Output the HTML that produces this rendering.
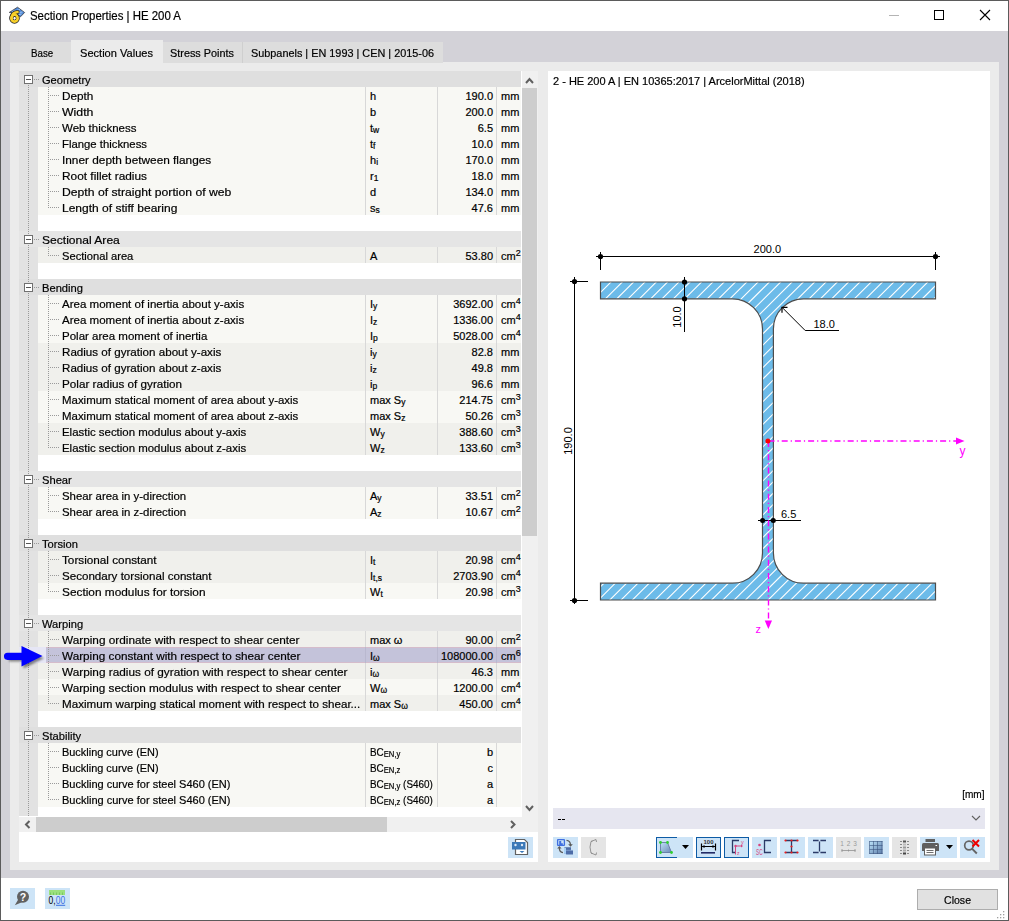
<!DOCTYPE html><html><head><meta charset="utf-8"><style>html,body{margin:0;padding:0;}body{width:1009px;height:921px;overflow:hidden;position:relative;background:#fff;font-family:"Liberation Sans",sans-serif;}div{box-sizing:border-box;}.t{position:absolute;height:16px;line-height:16px;padding-top:1px;font-size:11.5px;white-space:nowrap;color:#000;-webkit-text-stroke:0.2px #000}.v,.u,.sy{font-size:11px}.sb{font-size:8.5px;position:relative;top:1px}.sp{font-size:9px;position:relative;top:-4px}</style></head><body>
<div style="position:absolute;left:0px;top:0px;width:1009px;height:921px;background:#5b5b5b;"></div>
<div style="position:absolute;left:1px;top:1px;width:1007px;height:919px;background:#ffffff;"></div>
<div style="position:absolute;left:1px;top:31px;width:1007px;height:847px;background:#d3d2d8;"></div>
<div style="position:absolute;left:10px;top:62px;width:989px;height:808px;background:#ebebeb;"></div>
<div style="position:absolute;left:10px;top:42px;width:61px;height:21px;background:#dddddd;"></div>
<div style="position:absolute;left:71px;top:40px;width:92px;height:22px;background:#ebebeb;"></div>
<div style="position:absolute;left:163px;top:42px;width:79px;height:21px;background:#dddddd;"></div>
<div style="position:absolute;left:242px;top:42px;width:1px;height:21px;background:#cfcfcf;"></div>
<div style="position:absolute;left:243px;top:42px;width:200px;height:21px;background:#dddddd;"></div>
<div style="position:absolute;left:30px;top:9.94px;font-size:12px;line-height:13.80px;color:#000;white-space:nowrap;-webkit-text-stroke:0.2px #000;transform-origin:0 0;transform:scaleX(0.9524);">Section Properties | HE 200 A</div>
<div style="position:absolute;left:30.5px;top:47.39px;font-size:11.5px;line-height:13.22px;color:#000;white-space:nowrap;-webkit-text-stroke:0.2px #000;transform-origin:0 0;transform:scaleX(0.8469);">Base</div>
<div style="position:absolute;left:80px;top:47.39px;font-size:11.5px;line-height:13.22px;color:#000;white-space:nowrap;-webkit-text-stroke:0.2px #000;transform-origin:0 0;transform:scaleX(0.9623);">Section Values</div>
<div style="position:absolute;left:170px;top:47.39px;font-size:11.5px;line-height:13.22px;color:#000;white-space:nowrap;-webkit-text-stroke:0.2px #000;transform-origin:0 0;transform:scaleX(0.9447);">Stress Points</div>
<div style="position:absolute;left:251px;top:47.39px;font-size:11.5px;line-height:13.22px;color:#000;white-space:nowrap;-webkit-text-stroke:0.2px #000;transform-origin:0 0;transform:scaleX(0.9447);">Subpanels | EN 1993 | CEN | 2015-06</div>
<div style="position:absolute;left:889px;top:15px;width:10px;height:1px;background:#b4b4b4;"></div>
<div style="position:absolute;left:934px;top:10px;width:10px;height:10px;border:1px solid #000;"></div>
<svg style="position:absolute;left:979px;top:9px" width="12" height="12" viewBox="0 0 12 12"><path d="M1 1L11 11M11 1L1 11" stroke="#000" stroke-width="1.1"/></svg>
<div style="position:absolute;left:19px;top:71px;width:519px;height:791px;background:#ffffff;"></div>
<div style="position:absolute;left:19px;top:71px;width:19px;height:745px;background:#e2e2e2;"></div>
<div style="position:absolute;left:19px;top:71px;width:502px;height:16px;background:#dfdfdf;"></div>
<div style="position:absolute;left:38px;top:87px;width:483px;height:16px;background:#f8f8f4;"></div>
<div style="position:absolute;left:365px;top:87px;width:1px;height:16px;background:#d8d8d8;"></div>
<div style="position:absolute;left:437px;top:87px;width:1px;height:16px;background:#d8d8d8;"></div>
<div style="position:absolute;left:496px;top:87px;width:1px;height:16px;background:#d8d8d8;"></div>
<div style="position:absolute;left:38px;top:103px;width:483px;height:16px;background:#f8f8f4;"></div>
<div style="position:absolute;left:365px;top:103px;width:1px;height:16px;background:#d8d8d8;"></div>
<div style="position:absolute;left:437px;top:103px;width:1px;height:16px;background:#d8d8d8;"></div>
<div style="position:absolute;left:496px;top:103px;width:1px;height:16px;background:#d8d8d8;"></div>
<div style="position:absolute;left:38px;top:119px;width:483px;height:16px;background:#f8f8f4;"></div>
<div style="position:absolute;left:365px;top:119px;width:1px;height:16px;background:#d8d8d8;"></div>
<div style="position:absolute;left:437px;top:119px;width:1px;height:16px;background:#d8d8d8;"></div>
<div style="position:absolute;left:496px;top:119px;width:1px;height:16px;background:#d8d8d8;"></div>
<div style="position:absolute;left:38px;top:135px;width:483px;height:16px;background:#f8f8f4;"></div>
<div style="position:absolute;left:365px;top:135px;width:1px;height:16px;background:#d8d8d8;"></div>
<div style="position:absolute;left:437px;top:135px;width:1px;height:16px;background:#d8d8d8;"></div>
<div style="position:absolute;left:496px;top:135px;width:1px;height:16px;background:#d8d8d8;"></div>
<div style="position:absolute;left:38px;top:151px;width:483px;height:16px;background:#f8f8f4;"></div>
<div style="position:absolute;left:365px;top:151px;width:1px;height:16px;background:#d8d8d8;"></div>
<div style="position:absolute;left:437px;top:151px;width:1px;height:16px;background:#d8d8d8;"></div>
<div style="position:absolute;left:496px;top:151px;width:1px;height:16px;background:#d8d8d8;"></div>
<div style="position:absolute;left:38px;top:167px;width:483px;height:16px;background:#f8f8f4;"></div>
<div style="position:absolute;left:365px;top:167px;width:1px;height:16px;background:#d8d8d8;"></div>
<div style="position:absolute;left:437px;top:167px;width:1px;height:16px;background:#d8d8d8;"></div>
<div style="position:absolute;left:496px;top:167px;width:1px;height:16px;background:#d8d8d8;"></div>
<div style="position:absolute;left:38px;top:183px;width:483px;height:16px;background:#f8f8f4;"></div>
<div style="position:absolute;left:365px;top:183px;width:1px;height:16px;background:#d8d8d8;"></div>
<div style="position:absolute;left:437px;top:183px;width:1px;height:16px;background:#d8d8d8;"></div>
<div style="position:absolute;left:496px;top:183px;width:1px;height:16px;background:#d8d8d8;"></div>
<div style="position:absolute;left:38px;top:199px;width:483px;height:16px;background:#f8f8f4;"></div>
<div style="position:absolute;left:365px;top:199px;width:1px;height:16px;background:#d8d8d8;"></div>
<div style="position:absolute;left:437px;top:199px;width:1px;height:16px;background:#d8d8d8;"></div>
<div style="position:absolute;left:496px;top:199px;width:1px;height:16px;background:#d8d8d8;"></div>
<div style="position:absolute;left:19px;top:231px;width:502px;height:16px;background:#e5e5e5;"></div>
<div style="position:absolute;left:38px;top:247px;width:483px;height:16px;background:#f0f0ec;"></div>
<div style="position:absolute;left:365px;top:247px;width:1px;height:16px;background:#d8d8d8;"></div>
<div style="position:absolute;left:437px;top:247px;width:1px;height:16px;background:#d8d8d8;"></div>
<div style="position:absolute;left:496px;top:247px;width:1px;height:16px;background:#d8d8d8;"></div>
<div style="position:absolute;left:19px;top:279px;width:502px;height:16px;background:#dfdfdf;"></div>
<div style="position:absolute;left:38px;top:295px;width:483px;height:16px;background:#f8f8f4;"></div>
<div style="position:absolute;left:365px;top:295px;width:1px;height:16px;background:#d8d8d8;"></div>
<div style="position:absolute;left:437px;top:295px;width:1px;height:16px;background:#d8d8d8;"></div>
<div style="position:absolute;left:496px;top:295px;width:1px;height:16px;background:#d8d8d8;"></div>
<div style="position:absolute;left:38px;top:311px;width:483px;height:16px;background:#f8f8f4;"></div>
<div style="position:absolute;left:365px;top:311px;width:1px;height:16px;background:#d8d8d8;"></div>
<div style="position:absolute;left:437px;top:311px;width:1px;height:16px;background:#d8d8d8;"></div>
<div style="position:absolute;left:496px;top:311px;width:1px;height:16px;background:#d8d8d8;"></div>
<div style="position:absolute;left:38px;top:327px;width:483px;height:16px;background:#f8f8f4;"></div>
<div style="position:absolute;left:365px;top:327px;width:1px;height:16px;background:#d8d8d8;"></div>
<div style="position:absolute;left:437px;top:327px;width:1px;height:16px;background:#d8d8d8;"></div>
<div style="position:absolute;left:496px;top:327px;width:1px;height:16px;background:#d8d8d8;"></div>
<div style="position:absolute;left:38px;top:343px;width:483px;height:16px;background:#f0f0ec;"></div>
<div style="position:absolute;left:365px;top:343px;width:1px;height:16px;background:#d8d8d8;"></div>
<div style="position:absolute;left:437px;top:343px;width:1px;height:16px;background:#d8d8d8;"></div>
<div style="position:absolute;left:496px;top:343px;width:1px;height:16px;background:#d8d8d8;"></div>
<div style="position:absolute;left:38px;top:359px;width:483px;height:16px;background:#f0f0ec;"></div>
<div style="position:absolute;left:365px;top:359px;width:1px;height:16px;background:#d8d8d8;"></div>
<div style="position:absolute;left:437px;top:359px;width:1px;height:16px;background:#d8d8d8;"></div>
<div style="position:absolute;left:496px;top:359px;width:1px;height:16px;background:#d8d8d8;"></div>
<div style="position:absolute;left:38px;top:375px;width:483px;height:16px;background:#f0f0ec;"></div>
<div style="position:absolute;left:365px;top:375px;width:1px;height:16px;background:#d8d8d8;"></div>
<div style="position:absolute;left:437px;top:375px;width:1px;height:16px;background:#d8d8d8;"></div>
<div style="position:absolute;left:496px;top:375px;width:1px;height:16px;background:#d8d8d8;"></div>
<div style="position:absolute;left:38px;top:391px;width:483px;height:16px;background:#f8f8f4;"></div>
<div style="position:absolute;left:365px;top:391px;width:1px;height:16px;background:#d8d8d8;"></div>
<div style="position:absolute;left:437px;top:391px;width:1px;height:16px;background:#d8d8d8;"></div>
<div style="position:absolute;left:496px;top:391px;width:1px;height:16px;background:#d8d8d8;"></div>
<div style="position:absolute;left:38px;top:407px;width:483px;height:16px;background:#f8f8f4;"></div>
<div style="position:absolute;left:365px;top:407px;width:1px;height:16px;background:#d8d8d8;"></div>
<div style="position:absolute;left:437px;top:407px;width:1px;height:16px;background:#d8d8d8;"></div>
<div style="position:absolute;left:496px;top:407px;width:1px;height:16px;background:#d8d8d8;"></div>
<div style="position:absolute;left:38px;top:423px;width:483px;height:16px;background:#f0f0ec;"></div>
<div style="position:absolute;left:365px;top:423px;width:1px;height:16px;background:#d8d8d8;"></div>
<div style="position:absolute;left:437px;top:423px;width:1px;height:16px;background:#d8d8d8;"></div>
<div style="position:absolute;left:496px;top:423px;width:1px;height:16px;background:#d8d8d8;"></div>
<div style="position:absolute;left:38px;top:439px;width:483px;height:16px;background:#f0f0ec;"></div>
<div style="position:absolute;left:365px;top:439px;width:1px;height:16px;background:#d8d8d8;"></div>
<div style="position:absolute;left:437px;top:439px;width:1px;height:16px;background:#d8d8d8;"></div>
<div style="position:absolute;left:496px;top:439px;width:1px;height:16px;background:#d8d8d8;"></div>
<div style="position:absolute;left:19px;top:471px;width:502px;height:16px;background:#e5e5e5;"></div>
<div style="position:absolute;left:38px;top:487px;width:483px;height:16px;background:#f8f8f4;"></div>
<div style="position:absolute;left:365px;top:487px;width:1px;height:16px;background:#d8d8d8;"></div>
<div style="position:absolute;left:437px;top:487px;width:1px;height:16px;background:#d8d8d8;"></div>
<div style="position:absolute;left:496px;top:487px;width:1px;height:16px;background:#d8d8d8;"></div>
<div style="position:absolute;left:38px;top:503px;width:483px;height:16px;background:#f8f8f4;"></div>
<div style="position:absolute;left:365px;top:503px;width:1px;height:16px;background:#d8d8d8;"></div>
<div style="position:absolute;left:437px;top:503px;width:1px;height:16px;background:#d8d8d8;"></div>
<div style="position:absolute;left:496px;top:503px;width:1px;height:16px;background:#d8d8d8;"></div>
<div style="position:absolute;left:19px;top:535px;width:502px;height:16px;background:#dfdfdf;"></div>
<div style="position:absolute;left:38px;top:551px;width:483px;height:16px;background:#f0f0ec;"></div>
<div style="position:absolute;left:365px;top:551px;width:1px;height:16px;background:#d8d8d8;"></div>
<div style="position:absolute;left:437px;top:551px;width:1px;height:16px;background:#d8d8d8;"></div>
<div style="position:absolute;left:496px;top:551px;width:1px;height:16px;background:#d8d8d8;"></div>
<div style="position:absolute;left:38px;top:567px;width:483px;height:16px;background:#f0f0ec;"></div>
<div style="position:absolute;left:365px;top:567px;width:1px;height:16px;background:#d8d8d8;"></div>
<div style="position:absolute;left:437px;top:567px;width:1px;height:16px;background:#d8d8d8;"></div>
<div style="position:absolute;left:496px;top:567px;width:1px;height:16px;background:#d8d8d8;"></div>
<div style="position:absolute;left:38px;top:583px;width:483px;height:16px;background:#f8f8f4;"></div>
<div style="position:absolute;left:365px;top:583px;width:1px;height:16px;background:#d8d8d8;"></div>
<div style="position:absolute;left:437px;top:583px;width:1px;height:16px;background:#d8d8d8;"></div>
<div style="position:absolute;left:496px;top:583px;width:1px;height:16px;background:#d8d8d8;"></div>
<div style="position:absolute;left:19px;top:615px;width:502px;height:16px;background:#e5e5e5;"></div>
<div style="position:absolute;left:38px;top:631px;width:483px;height:16px;background:#f0f0ec;"></div>
<div style="position:absolute;left:365px;top:631px;width:1px;height:16px;background:#d8d8d8;"></div>
<div style="position:absolute;left:437px;top:631px;width:1px;height:16px;background:#d8d8d8;"></div>
<div style="position:absolute;left:496px;top:631px;width:1px;height:16px;background:#d8d8d8;"></div>
<div style="position:absolute;left:19px;top:647px;width:27px;height:16px;background:#e6e6f5;"></div>
<div style="position:absolute;left:46px;top:647px;width:475px;height:16px;background:#c4c3da;"></div>
<div style="position:absolute;left:46px;top:647px;width:475px;height:1px;background:#d5bccb;"></div>
<div style="position:absolute;left:46px;top:662px;width:475px;height:1px;background:#d5bccb;"></div>
<div style="position:absolute;left:365px;top:647px;width:1px;height:16px;background:#b9b8cf;"></div>
<div style="position:absolute;left:437px;top:647px;width:1px;height:16px;background:#b9b8cf;"></div>
<div style="position:absolute;left:496px;top:647px;width:1px;height:16px;background:#b9b8cf;"></div>
<div style="position:absolute;left:38px;top:663px;width:483px;height:16px;background:#f0f0ec;"></div>
<div style="position:absolute;left:365px;top:663px;width:1px;height:16px;background:#d8d8d8;"></div>
<div style="position:absolute;left:437px;top:663px;width:1px;height:16px;background:#d8d8d8;"></div>
<div style="position:absolute;left:496px;top:663px;width:1px;height:16px;background:#d8d8d8;"></div>
<div style="position:absolute;left:38px;top:679px;width:483px;height:16px;background:#f8f8f4;"></div>
<div style="position:absolute;left:365px;top:679px;width:1px;height:16px;background:#d8d8d8;"></div>
<div style="position:absolute;left:437px;top:679px;width:1px;height:16px;background:#d8d8d8;"></div>
<div style="position:absolute;left:496px;top:679px;width:1px;height:16px;background:#d8d8d8;"></div>
<div style="position:absolute;left:38px;top:695px;width:483px;height:16px;background:#f0f0ec;"></div>
<div style="position:absolute;left:365px;top:695px;width:1px;height:16px;background:#d8d8d8;"></div>
<div style="position:absolute;left:437px;top:695px;width:1px;height:16px;background:#d8d8d8;"></div>
<div style="position:absolute;left:496px;top:695px;width:1px;height:16px;background:#d8d8d8;"></div>
<div style="position:absolute;left:19px;top:727px;width:502px;height:16px;background:#dfdfdf;"></div>
<div style="position:absolute;left:38px;top:743px;width:483px;height:16px;background:#f8f8f4;"></div>
<div style="position:absolute;left:365px;top:743px;width:1px;height:16px;background:#d8d8d8;"></div>
<div style="position:absolute;left:437px;top:743px;width:1px;height:16px;background:#d8d8d8;"></div>
<div style="position:absolute;left:496px;top:743px;width:1px;height:16px;background:#d8d8d8;"></div>
<div style="position:absolute;left:38px;top:759px;width:483px;height:16px;background:#f8f8f4;"></div>
<div style="position:absolute;left:365px;top:759px;width:1px;height:16px;background:#d8d8d8;"></div>
<div style="position:absolute;left:437px;top:759px;width:1px;height:16px;background:#d8d8d8;"></div>
<div style="position:absolute;left:496px;top:759px;width:1px;height:16px;background:#d8d8d8;"></div>
<div style="position:absolute;left:38px;top:775px;width:483px;height:16px;background:#f8f8f4;"></div>
<div style="position:absolute;left:365px;top:775px;width:1px;height:16px;background:#d8d8d8;"></div>
<div style="position:absolute;left:437px;top:775px;width:1px;height:16px;background:#d8d8d8;"></div>
<div style="position:absolute;left:496px;top:775px;width:1px;height:16px;background:#d8d8d8;"></div>
<div style="position:absolute;left:38px;top:791px;width:483px;height:16px;background:#f8f8f4;"></div>
<div style="position:absolute;left:365px;top:791px;width:1px;height:16px;background:#d8d8d8;"></div>
<div style="position:absolute;left:437px;top:791px;width:1px;height:16px;background:#d8d8d8;"></div>
<div style="position:absolute;left:496px;top:791px;width:1px;height:16px;background:#d8d8d8;"></div>
<div style="position:absolute;left:48px;top:87px;width:1px;height:121px;background:repeating-linear-gradient(#9a9a9a 0 1px,transparent 1px 2px)"></div>
<div style="position:absolute;left:48px;top:247px;width:1px;height:9px;background:repeating-linear-gradient(#9a9a9a 0 1px,transparent 1px 2px)"></div>
<div style="position:absolute;left:48px;top:295px;width:1px;height:153px;background:repeating-linear-gradient(#9a9a9a 0 1px,transparent 1px 2px)"></div>
<div style="position:absolute;left:48px;top:487px;width:1px;height:25px;background:repeating-linear-gradient(#9a9a9a 0 1px,transparent 1px 2px)"></div>
<div style="position:absolute;left:48px;top:551px;width:1px;height:41px;background:repeating-linear-gradient(#9a9a9a 0 1px,transparent 1px 2px)"></div>
<div style="position:absolute;left:48px;top:631px;width:1px;height:73px;background:repeating-linear-gradient(#9a9a9a 0 1px,transparent 1px 2px)"></div>
<div style="position:absolute;left:48px;top:743px;width:1px;height:57px;background:repeating-linear-gradient(#9a9a9a 0 1px,transparent 1px 2px)"></div>
<div style="position:absolute;left:28px;top:85px;width:1px;height:732px;background:repeating-linear-gradient(#9a9a9a 0 1px,transparent 1px 2px)"></div>
<div style="position:absolute;left:34px;top:79px;width:6px;height:1px;background:repeating-linear-gradient(90deg,#9a9a9a 0 1px,transparent 1px 2px)"></div>
<div style="position:absolute;left:50px;top:95px;width:10px;height:1px;background:repeating-linear-gradient(90deg,#9a9a9a 0 1px,transparent 1px 2px)"></div>
<div style="position:absolute;left:50px;top:111px;width:10px;height:1px;background:repeating-linear-gradient(90deg,#9a9a9a 0 1px,transparent 1px 2px)"></div>
<div style="position:absolute;left:50px;top:127px;width:10px;height:1px;background:repeating-linear-gradient(90deg,#9a9a9a 0 1px,transparent 1px 2px)"></div>
<div style="position:absolute;left:50px;top:143px;width:10px;height:1px;background:repeating-linear-gradient(90deg,#9a9a9a 0 1px,transparent 1px 2px)"></div>
<div style="position:absolute;left:50px;top:159px;width:10px;height:1px;background:repeating-linear-gradient(90deg,#9a9a9a 0 1px,transparent 1px 2px)"></div>
<div style="position:absolute;left:50px;top:175px;width:10px;height:1px;background:repeating-linear-gradient(90deg,#9a9a9a 0 1px,transparent 1px 2px)"></div>
<div style="position:absolute;left:50px;top:191px;width:10px;height:1px;background:repeating-linear-gradient(90deg,#9a9a9a 0 1px,transparent 1px 2px)"></div>
<div style="position:absolute;left:50px;top:207px;width:10px;height:1px;background:repeating-linear-gradient(90deg,#9a9a9a 0 1px,transparent 1px 2px)"></div>
<div style="position:absolute;left:34px;top:239px;width:6px;height:1px;background:repeating-linear-gradient(90deg,#9a9a9a 0 1px,transparent 1px 2px)"></div>
<div style="position:absolute;left:50px;top:255px;width:10px;height:1px;background:repeating-linear-gradient(90deg,#9a9a9a 0 1px,transparent 1px 2px)"></div>
<div style="position:absolute;left:34px;top:287px;width:6px;height:1px;background:repeating-linear-gradient(90deg,#9a9a9a 0 1px,transparent 1px 2px)"></div>
<div style="position:absolute;left:50px;top:303px;width:10px;height:1px;background:repeating-linear-gradient(90deg,#9a9a9a 0 1px,transparent 1px 2px)"></div>
<div style="position:absolute;left:50px;top:319px;width:10px;height:1px;background:repeating-linear-gradient(90deg,#9a9a9a 0 1px,transparent 1px 2px)"></div>
<div style="position:absolute;left:50px;top:335px;width:10px;height:1px;background:repeating-linear-gradient(90deg,#9a9a9a 0 1px,transparent 1px 2px)"></div>
<div style="position:absolute;left:50px;top:351px;width:10px;height:1px;background:repeating-linear-gradient(90deg,#9a9a9a 0 1px,transparent 1px 2px)"></div>
<div style="position:absolute;left:50px;top:367px;width:10px;height:1px;background:repeating-linear-gradient(90deg,#9a9a9a 0 1px,transparent 1px 2px)"></div>
<div style="position:absolute;left:50px;top:383px;width:10px;height:1px;background:repeating-linear-gradient(90deg,#9a9a9a 0 1px,transparent 1px 2px)"></div>
<div style="position:absolute;left:50px;top:399px;width:10px;height:1px;background:repeating-linear-gradient(90deg,#9a9a9a 0 1px,transparent 1px 2px)"></div>
<div style="position:absolute;left:50px;top:415px;width:10px;height:1px;background:repeating-linear-gradient(90deg,#9a9a9a 0 1px,transparent 1px 2px)"></div>
<div style="position:absolute;left:50px;top:431px;width:10px;height:1px;background:repeating-linear-gradient(90deg,#9a9a9a 0 1px,transparent 1px 2px)"></div>
<div style="position:absolute;left:50px;top:447px;width:10px;height:1px;background:repeating-linear-gradient(90deg,#9a9a9a 0 1px,transparent 1px 2px)"></div>
<div style="position:absolute;left:34px;top:479px;width:6px;height:1px;background:repeating-linear-gradient(90deg,#9a9a9a 0 1px,transparent 1px 2px)"></div>
<div style="position:absolute;left:50px;top:495px;width:10px;height:1px;background:repeating-linear-gradient(90deg,#9a9a9a 0 1px,transparent 1px 2px)"></div>
<div style="position:absolute;left:50px;top:511px;width:10px;height:1px;background:repeating-linear-gradient(90deg,#9a9a9a 0 1px,transparent 1px 2px)"></div>
<div style="position:absolute;left:34px;top:543px;width:6px;height:1px;background:repeating-linear-gradient(90deg,#9a9a9a 0 1px,transparent 1px 2px)"></div>
<div style="position:absolute;left:50px;top:559px;width:10px;height:1px;background:repeating-linear-gradient(90deg,#9a9a9a 0 1px,transparent 1px 2px)"></div>
<div style="position:absolute;left:50px;top:575px;width:10px;height:1px;background:repeating-linear-gradient(90deg,#9a9a9a 0 1px,transparent 1px 2px)"></div>
<div style="position:absolute;left:50px;top:591px;width:10px;height:1px;background:repeating-linear-gradient(90deg,#9a9a9a 0 1px,transparent 1px 2px)"></div>
<div style="position:absolute;left:34px;top:623px;width:6px;height:1px;background:repeating-linear-gradient(90deg,#9a9a9a 0 1px,transparent 1px 2px)"></div>
<div style="position:absolute;left:50px;top:639px;width:10px;height:1px;background:repeating-linear-gradient(90deg,#9a9a9a 0 1px,transparent 1px 2px)"></div>
<div style="position:absolute;left:50px;top:655px;width:10px;height:1px;background:repeating-linear-gradient(90deg,#9a9a9a 0 1px,transparent 1px 2px)"></div>
<div style="position:absolute;left:50px;top:671px;width:10px;height:1px;background:repeating-linear-gradient(90deg,#9a9a9a 0 1px,transparent 1px 2px)"></div>
<div style="position:absolute;left:50px;top:687px;width:10px;height:1px;background:repeating-linear-gradient(90deg,#9a9a9a 0 1px,transparent 1px 2px)"></div>
<div style="position:absolute;left:50px;top:703px;width:10px;height:1px;background:repeating-linear-gradient(90deg,#9a9a9a 0 1px,transparent 1px 2px)"></div>
<div style="position:absolute;left:34px;top:735px;width:6px;height:1px;background:repeating-linear-gradient(90deg,#9a9a9a 0 1px,transparent 1px 2px)"></div>
<div style="position:absolute;left:50px;top:751px;width:10px;height:1px;background:repeating-linear-gradient(90deg,#9a9a9a 0 1px,transparent 1px 2px)"></div>
<div style="position:absolute;left:50px;top:767px;width:10px;height:1px;background:repeating-linear-gradient(90deg,#9a9a9a 0 1px,transparent 1px 2px)"></div>
<div style="position:absolute;left:50px;top:783px;width:10px;height:1px;background:repeating-linear-gradient(90deg,#9a9a9a 0 1px,transparent 1px 2px)"></div>
<div style="position:absolute;left:50px;top:799px;width:10px;height:1px;background:repeating-linear-gradient(90deg,#9a9a9a 0 1px,transparent 1px 2px)"></div>
<div style="position:absolute;left:24px;top:75px;width:9px;height:9px;border:1px solid #707070;background:#fff"></div><div style="position:absolute;left:26px;top:79px;width:5px;height:1px;background:#555"></div>
<div style="position:absolute;left:24px;top:235px;width:9px;height:9px;border:1px solid #707070;background:#fff"></div><div style="position:absolute;left:26px;top:239px;width:5px;height:1px;background:#555"></div>
<div style="position:absolute;left:24px;top:283px;width:9px;height:9px;border:1px solid #707070;background:#fff"></div><div style="position:absolute;left:26px;top:287px;width:5px;height:1px;background:#555"></div>
<div style="position:absolute;left:24px;top:475px;width:9px;height:9px;border:1px solid #707070;background:#fff"></div><div style="position:absolute;left:26px;top:479px;width:5px;height:1px;background:#555"></div>
<div style="position:absolute;left:24px;top:539px;width:9px;height:9px;border:1px solid #707070;background:#fff"></div><div style="position:absolute;left:26px;top:543px;width:5px;height:1px;background:#555"></div>
<div style="position:absolute;left:24px;top:619px;width:9px;height:9px;border:1px solid #707070;background:#fff"></div><div style="position:absolute;left:26px;top:623px;width:5px;height:1px;background:#555"></div>
<div style="position:absolute;left:24px;top:731px;width:9px;height:9px;border:1px solid #707070;background:#fff"></div><div style="position:absolute;left:26px;top:735px;width:5px;height:1px;background:#555"></div>
<div class="t" style="left:42px;top:71px;transform:scaleX(0.9626);transform-origin:0 0">Geometry</div>
<div class="t" style="left:62px;top:87px;transform:scaleX(1.0233);transform-origin:0 0">Depth</div>
<div class="t sy" style="left:370px;top:87px;transform:scaleX(1.0);transform-origin:0 0">h</div>
<div class="t v" style="right:516px;top:87px">190.0</div>
<div class="t u" style="left:501px;top:87px">mm</div>
<div class="t" style="left:62px;top:103px;transform:scaleX(1.0682);transform-origin:0 0">Width</div>
<div class="t sy" style="left:370px;top:103px;transform:scaleX(1.0);transform-origin:0 0">b</div>
<div class="t v" style="right:516px;top:103px">200.0</div>
<div class="t u" style="left:501px;top:103px">mm</div>
<div class="t" style="left:62px;top:119px;transform:scaleX(0.9991);transform-origin:0 0">Web thickness</div>
<div class="t sy" style="left:370px;top:119px;transform:scaleX(1.0);transform-origin:0 0">t<span class="sb">w</span></div>
<div class="t v" style="right:516px;top:119px">6.5</div>
<div class="t u" style="left:501px;top:119px">mm</div>
<div class="t" style="left:62px;top:135px;transform:scaleX(0.9850);transform-origin:0 0">Flange thickness</div>
<div class="t sy" style="left:370px;top:135px;transform:scaleX(1.0);transform-origin:0 0">t<span class="sb">f</span></div>
<div class="t v" style="right:516px;top:135px">10.0</div>
<div class="t u" style="left:501px;top:135px">mm</div>
<div class="t" style="left:62px;top:151px;transform:scaleX(1.0280);transform-origin:0 0">Inner depth between flanges</div>
<div class="t sy" style="left:370px;top:151px;transform:scaleX(1.0);transform-origin:0 0">h<span class="sb">i</span></div>
<div class="t v" style="right:516px;top:151px">170.0</div>
<div class="t u" style="left:501px;top:151px">mm</div>
<div class="t" style="left:62px;top:167px;transform:scaleX(1.0309);transform-origin:0 0">Root fillet radius</div>
<div class="t sy" style="left:370px;top:167px;transform:scaleX(1.0);transform-origin:0 0">r<span class="sb">1</span></div>
<div class="t v" style="right:516px;top:167px">18.0</div>
<div class="t u" style="left:501px;top:167px">mm</div>
<div class="t" style="left:62px;top:183px;transform:scaleX(1.0594);transform-origin:0 0">Depth of straight portion of web</div>
<div class="t sy" style="left:370px;top:183px;transform:scaleX(1.0);transform-origin:0 0">d</div>
<div class="t v" style="right:516px;top:183px">134.0</div>
<div class="t u" style="left:501px;top:183px">mm</div>
<div class="t" style="left:62px;top:199px;transform:scaleX(1.0453);transform-origin:0 0">Length of stiff bearing</div>
<div class="t sy" style="left:370px;top:199px;transform:scaleX(1.0);transform-origin:0 0">s<span class="sb">s</span></div>
<div class="t v" style="right:516px;top:199px">47.6</div>
<div class="t u" style="left:501px;top:199px">mm</div>
<div class="t" style="left:42px;top:231px;transform:scaleX(1.0491);transform-origin:0 0">Sectional Area</div>
<div class="t" style="left:62px;top:247px;transform:scaleX(0.9700);transform-origin:0 0">Sectional area</div>
<div class="t sy" style="left:370px;top:247px;transform:scaleX(1.0);transform-origin:0 0">A</div>
<div class="t v" style="right:516px;top:247px">53.80</div>
<div class="t u" style="left:501px;top:247px">cm<span class="sp">2</span></div>
<div class="t" style="left:42px;top:279px;transform:scaleX(0.9700);transform-origin:0 0">Bending</div>
<div class="t" style="left:62px;top:295px;transform:scaleX(1.0037);transform-origin:0 0">Area moment of inertia about y-axis</div>
<div class="t sy" style="left:370px;top:295px;transform:scaleX(1.0);transform-origin:0 0">I<span class="sb">y</span></div>
<div class="t v" style="right:516px;top:295px">3692.00</div>
<div class="t u" style="left:501px;top:295px">cm<span class="sp">4</span></div>
<div class="t" style="left:62px;top:311px;transform:scaleX(1.0037);transform-origin:0 0">Area moment of inertia about z-axis</div>
<div class="t sy" style="left:370px;top:311px;transform:scaleX(1.0);transform-origin:0 0">I<span class="sb">z</span></div>
<div class="t v" style="right:516px;top:311px">1336.00</div>
<div class="t u" style="left:501px;top:311px">cm<span class="sp">4</span></div>
<div class="t" style="left:62px;top:327px;transform:scaleX(1.0014);transform-origin:0 0">Polar area moment of inertia</div>
<div class="t sy" style="left:370px;top:327px;transform:scaleX(1.0);transform-origin:0 0">I<span class="sb">p</span></div>
<div class="t v" style="right:516px;top:327px">5028.00</div>
<div class="t u" style="left:501px;top:327px">cm<span class="sp">4</span></div>
<div class="t" style="left:62px;top:343px;transform:scaleX(1.0089);transform-origin:0 0">Radius of gyration about y-axis</div>
<div class="t sy" style="left:370px;top:343px;transform:scaleX(1.0);transform-origin:0 0">i<span class="sb">y</span></div>
<div class="t v" style="right:516px;top:343px">82.8</div>
<div class="t u" style="left:501px;top:343px">mm</div>
<div class="t" style="left:62px;top:359px;transform:scaleX(1.0089);transform-origin:0 0">Radius of gyration about z-axis</div>
<div class="t sy" style="left:370px;top:359px;transform:scaleX(1.0);transform-origin:0 0">i<span class="sb">z</span></div>
<div class="t v" style="right:516px;top:359px">49.8</div>
<div class="t u" style="left:501px;top:359px">mm</div>
<div class="t" style="left:62px;top:375px;transform:scaleX(1.0156);transform-origin:0 0">Polar radius of gyration</div>
<div class="t sy" style="left:370px;top:375px;transform:scaleX(1.0);transform-origin:0 0">i<span class="sb">p</span></div>
<div class="t v" style="right:516px;top:375px">96.6</div>
<div class="t u" style="left:501px;top:375px">mm</div>
<div class="t" style="left:62px;top:391px;transform:scaleX(0.9939);transform-origin:0 0">Maximum statical moment of area about y-axis</div>
<div class="t sy" style="left:370px;top:391px;transform:scaleX(1.0);transform-origin:0 0">max S<span class="sb">y</span></div>
<div class="t v" style="right:516px;top:391px">214.75</div>
<div class="t u" style="left:501px;top:391px">cm<span class="sp">3</span></div>
<div class="t" style="left:62px;top:407px;transform:scaleX(0.9939);transform-origin:0 0">Maximum statical moment of area about z-axis</div>
<div class="t sy" style="left:370px;top:407px;transform:scaleX(1.0);transform-origin:0 0">max S<span class="sb">z</span></div>
<div class="t v" style="right:516px;top:407px">50.26</div>
<div class="t u" style="left:501px;top:407px">cm<span class="sp">3</span></div>
<div class="t" style="left:62px;top:423px;transform:scaleX(0.9937);transform-origin:0 0">Elastic section modulus about y-axis</div>
<div class="t sy" style="left:370px;top:423px;transform:scaleX(1.0);transform-origin:0 0">W<span class="sb">y</span></div>
<div class="t v" style="right:516px;top:423px">388.60</div>
<div class="t u" style="left:501px;top:423px">cm<span class="sp">3</span></div>
<div class="t" style="left:62px;top:439px;transform:scaleX(0.9937);transform-origin:0 0">Elastic section modulus about z-axis</div>
<div class="t sy" style="left:370px;top:439px;transform:scaleX(1.0);transform-origin:0 0">W<span class="sb">z</span></div>
<div class="t v" style="right:516px;top:439px">133.60</div>
<div class="t u" style="left:501px;top:439px">cm<span class="sp">3</span></div>
<div class="t" style="left:42px;top:471px;transform:scaleX(0.9700);transform-origin:0 0">Shear</div>
<div class="t" style="left:62px;top:487px;transform:scaleX(0.9913);transform-origin:0 0">Shear area in y-direction</div>
<div class="t sy" style="left:370px;top:487px;transform:scaleX(1.0);transform-origin:0 0">A<span class="sb">y</span></div>
<div class="t v" style="right:516px;top:487px">33.51</div>
<div class="t u" style="left:501px;top:487px">cm<span class="sp">2</span></div>
<div class="t" style="left:62px;top:503px;transform:scaleX(0.9913);transform-origin:0 0">Shear area in z-direction</div>
<div class="t sy" style="left:370px;top:503px;transform:scaleX(1.0);transform-origin:0 0">A<span class="sb">z</span></div>
<div class="t v" style="right:516px;top:503px">10.67</div>
<div class="t u" style="left:501px;top:503px">cm<span class="sp">2</span></div>
<div class="t" style="left:42px;top:535px;transform:scaleX(0.9700);transform-origin:0 0">Torsion</div>
<div class="t" style="left:62px;top:551px;transform:scaleX(1.0206);transform-origin:0 0">Torsional constant</div>
<div class="t sy" style="left:370px;top:551px;transform:scaleX(1.0);transform-origin:0 0">I<span class="sb">t</span></div>
<div class="t v" style="right:516px;top:551px">20.98</div>
<div class="t u" style="left:501px;top:551px">cm<span class="sp">4</span></div>
<div class="t" style="left:62px;top:567px;transform:scaleX(1.0080);transform-origin:0 0">Secondary torsional constant</div>
<div class="t sy" style="left:370px;top:567px;transform:scaleX(1.0);transform-origin:0 0">I<span class="sb">t,s</span></div>
<div class="t v" style="right:516px;top:567px">2703.90</div>
<div class="t u" style="left:501px;top:567px">cm<span class="sp">4</span></div>
<div class="t" style="left:62px;top:583px;transform:scaleX(1.0298);transform-origin:0 0">Section modulus for torsion</div>
<div class="t sy" style="left:370px;top:583px;transform:scaleX(1.0);transform-origin:0 0">W<span class="sb">t</span></div>
<div class="t v" style="right:516px;top:583px">20.98</div>
<div class="t u" style="left:501px;top:583px">cm<span class="sp">3</span></div>
<div class="t" style="left:42px;top:615px;transform:scaleX(0.9700);transform-origin:0 0">Warping</div>
<div class="t" style="left:62px;top:631px;transform:scaleX(1.0255);transform-origin:0 0">Warping ordinate with respect to shear center</div>
<div class="t sy" style="left:370px;top:631px;transform:scaleX(1.0);transform-origin:0 0">max ω</div>
<div class="t v" style="right:516px;top:631px">90.00</div>
<div class="t u" style="left:501px;top:631px">cm<span class="sp">2</span></div>
<div class="t" style="left:62px;top:647px;transform:scaleX(1.0209);transform-origin:0 0">Warping constant with respect to shear center</div>
<div class="t sy" style="left:370px;top:647px;transform:scaleX(1.0);transform-origin:0 0">I<span class="sb">ω</span></div>
<div class="t v" style="right:516px;top:647px">108000.00</div>
<div class="t u" style="left:501px;top:647px">cm<span class="sp">6</span></div>
<div class="t" style="left:62px;top:663px;transform:scaleX(1.0257);transform-origin:0 0">Warping radius of gyration with respect to shear center</div>
<div class="t sy" style="left:370px;top:663px;transform:scaleX(1.0);transform-origin:0 0">i<span class="sb">ω</span></div>
<div class="t v" style="right:516px;top:663px">46.3</div>
<div class="t u" style="left:501px;top:663px">mm</div>
<div class="t" style="left:62px;top:679px;transform:scaleX(1.0211);transform-origin:0 0">Warping section modulus with respect to shear center</div>
<div class="t sy" style="left:370px;top:679px;transform:scaleX(1.0);transform-origin:0 0">W<span class="sb">ω</span></div>
<div class="t v" style="right:516px;top:679px">1200.00</div>
<div class="t u" style="left:501px;top:679px">cm<span class="sp">4</span></div>
<div class="t" style="left:62px;top:695px;transform:scaleX(1.0102);transform-origin:0 0">Maximum warping statical moment with respect to shear...</div>
<div class="t sy" style="left:370px;top:695px;transform:scaleX(1.0);transform-origin:0 0">max S<span class="sb">ω</span></div>
<div class="t v" style="right:516px;top:695px">450.00</div>
<div class="t u" style="left:501px;top:695px">cm<span class="sp">4</span></div>
<div class="t" style="left:42px;top:727px;transform:scaleX(0.9700);transform-origin:0 0">Stability</div>
<div class="t" style="left:62px;top:743px;transform:scaleX(0.9506);transform-origin:0 0">Buckling curve (EN)</div>
<div class="t sy" style="left:370px;top:743px;transform:scaleX(0.9);transform-origin:0 0">BC<span class="sb">EN,y</span></div>
<div class="t v" style="right:516px;top:743px">b</div>
<div class="t" style="left:62px;top:759px;transform:scaleX(0.9506);transform-origin:0 0">Buckling curve (EN)</div>
<div class="t sy" style="left:370px;top:759px;transform:scaleX(0.9);transform-origin:0 0">BC<span class="sb">EN,z</span></div>
<div class="t v" style="right:516px;top:759px">c</div>
<div class="t" style="left:62px;top:775px;transform:scaleX(0.9586);transform-origin:0 0">Buckling curve for steel S460 (EN)</div>
<div class="t sy" style="left:370px;top:775px;transform:scaleX(0.9);transform-origin:0 0">BC<span class="sb">EN,y</span> (S460)</div>
<div class="t v" style="right:516px;top:775px">a</div>
<div class="t" style="left:62px;top:791px;transform:scaleX(0.9586);transform-origin:0 0">Buckling curve for steel S460 (EN)</div>
<div class="t sy" style="left:370px;top:791px;transform:scaleX(0.9);transform-origin:0 0">BC<span class="sb">EN,z</span> (S460)</div>
<div class="t v" style="right:516px;top:791px">a</div>
<div style="position:absolute;left:548px;top:71px;width:442px;height:791px;background:#ffffff;"></div>
<div style="position:absolute;left:553px;top:75.39px;font-size:11.5px;line-height:13.22px;color:#000;white-space:nowrap;-webkit-text-stroke:0.2px #000;transform-origin:0 0;transform:scaleX(0.9568);">2 - HE 200 A | EN 10365:2017 | ArcelorMittal (2018)</div>
<svg style="position:absolute;left:0;top:0" width="1009" height="921" viewBox="0 0 1009 921">
<defs><clipPath id="sec"><path d="M600.5 282.0H935.5V298.8H803.6A30.2 30.2 0 0 0 773.4 329.0V553.0A30.2 30.2 0 0 0 803.6 583.2H935.5V600.0H600.5V583.2H732.3A30.2 30.2 0 0 0 762.5 553.0V329.0A30.2 30.2 0 0 0 732.3 298.8H600.5Z"/></clipPath></defs>
<path d="M600.5 282.0H935.5V298.8H803.6A30.2 30.2 0 0 0 773.4 329.0V553.0A30.2 30.2 0 0 0 803.6 583.2H935.5V600.0H600.5V583.2H732.3A30.2 30.2 0 0 0 762.5 553.0V329.0A30.2 30.2 0 0 0 732.3 298.8H600.5Z" fill="#6cbbe9"/>
<g clip-path="url(#sec)"><path d="M267.36 603.00L591.36 279.00M278.68 603.00L602.68 279.00M289.99 603.00L613.99 279.00M301.31 603.00L625.31 279.00M312.62 603.00L636.62 279.00M323.93 603.00L647.93 279.00M335.25 603.00L659.25 279.00M346.56 603.00L670.56 279.00M357.88 603.00L681.88 279.00M369.19 603.00L693.19 279.00M380.50 603.00L704.50 279.00M391.82 603.00L715.82 279.00M403.13 603.00L727.13 279.00M414.45 603.00L738.45 279.00M425.76 603.00L749.76 279.00M437.07 603.00L761.07 279.00M448.39 603.00L772.39 279.00M459.70 603.00L783.70 279.00M471.02 603.00L795.02 279.00M482.33 603.00L806.33 279.00M493.64 603.00L817.64 279.00M504.96 603.00L828.96 279.00M516.27 603.00L840.27 279.00M527.59 603.00L851.59 279.00M538.90 603.00L862.90 279.00M550.21 603.00L874.21 279.00M561.53 603.00L885.53 279.00M572.84 603.00L896.84 279.00M584.16 603.00L908.16 279.00M595.47 603.00L919.47 279.00M606.78 603.00L930.78 279.00M618.10 603.00L942.10 279.00M629.41 603.00L953.41 279.00M640.73 603.00L964.73 279.00M652.04 603.00L976.04 279.00M663.35 603.00L987.35 279.00M674.67 603.00L998.67 279.00M685.98 603.00L1009.98 279.00M697.30 603.00L1021.30 279.00M708.61 603.00L1032.61 279.00M719.92 603.00L1043.92 279.00M731.24 603.00L1055.24 279.00M742.55 603.00L1066.55 279.00M753.87 603.00L1077.87 279.00M765.18 603.00L1089.18 279.00M776.49 603.00L1100.49 279.00M787.81 603.00L1111.81 279.00M799.12 603.00L1123.12 279.00M810.44 603.00L1134.44 279.00M821.75 603.00L1145.75 279.00M833.06 603.00L1157.06 279.00M844.38 603.00L1168.38 279.00M855.69 603.00L1179.69 279.00M867.01 603.00L1191.01 279.00M878.32 603.00L1202.32 279.00M889.63 603.00L1213.63 279.00M900.95 603.00L1224.95 279.00M912.26 603.00L1236.26 279.00M923.58 603.00L1247.58 279.00M934.89 603.00L1258.89 279.00" stroke="#ffffff" stroke-width="1.1" fill="none"/></g>
<path d="M600.5 282.0H935.5V298.8H803.6A30.2 30.2 0 0 0 773.4 329.0V553.0A30.2 30.2 0 0 0 803.6 583.2H935.5V600.0H600.5V583.2H732.3A30.2 30.2 0 0 0 762.5 553.0V329.0A30.2 30.2 0 0 0 732.3 298.8H600.5Z" fill="none" stroke="#4d4d4d" stroke-width="1.2"/>
<path d="M596 256.5H940" stroke="#000" stroke-width="1" fill="none" />
<path d="M600.5 252V270M935.5 252V270" stroke="#000" stroke-width="1" fill="none" />
<circle cx="600.5" cy="256.5" r="2.6" fill="#000"/>
<circle cx="935.5" cy="256.5" r="2.6" fill="#000"/>
<path d="M574.5 277V604" stroke="#000" stroke-width="1" fill="none" />
<path d="M570 281.5H588M570 600.5H588" stroke="#000" stroke-width="1" fill="none" />
<circle cx="574.5" cy="281.5" r="2.6" fill="#000"/>
<circle cx="574.5" cy="600.5" r="2.6" fill="#000"/>
<path d="M684.5 277V332" stroke="#000" stroke-width="1" fill="none" />
<circle cx="684.5" cy="282" r="2.6" fill="#000"/>
<circle cx="684.5" cy="298.8" r="2.6" fill="#000"/>
<path d="M758 520.5H801" stroke="#000" stroke-width="1" fill="none" />
<circle cx="762.6" cy="520.5" r="2.5" fill="#000"/>
<circle cx="773.3" cy="520.5" r="2.5" fill="#000"/>
<path d="M782 307.3L805.2 330.5H839" stroke="#000" stroke-width="1" fill="none" />
<path d="M787.5 307.3H782V312.8" stroke="#000" stroke-width="1.2" fill="none" />
<path d="M768.5 441H957" stroke="#ff00ff" stroke-width="1.4" fill="none" stroke-dasharray="6 3 1.2 3" stroke-dashoffset="0"/>
<path d="M768.5 441V621" stroke="#ff00ff" stroke-width="1.4" fill="none" stroke-dasharray="6 3 1.2 3"/>
<path d="M956 437.5L964.5 441L956 444.5Z" fill="#ff00ff"/>
<path d="M764.7 620.5L772 620.5L768.4 629Z" fill="#ff00ff"/>
<circle cx="767.9" cy="441.1" r="2.5" fill="#ff0000"/>
<text x="767.3" y="253" font-family="Liberation Sans" font-size="11" fill="#000" text-anchor="middle">200.0</text>
<text x="813.5" y="328" font-family="Liberation Sans" font-size="11" fill="#000" text-anchor="start">18.0</text>
<text x="781" y="518" font-family="Liberation Sans" font-size="11" fill="#000" text-anchor="start">6.5</text>
<text x="572" y="441" font-family="Liberation Sans" font-size="11" fill="#000" text-anchor="middle" transform="rotate(-90 572 441)">190.0</text>
<text x="681" y="317" font-family="Liberation Sans" font-size="11" fill="#000" text-anchor="middle" transform="rotate(-90 681 317)">10.0</text>
<text x="959.5" y="455" font-family="Liberation Sans" font-size="12" fill="#ff00ff" text-anchor="start">y</text>
<text x="755.5" y="633" font-family="Liberation Sans" font-size="11" fill="#ff00ff" text-anchor="start">z</text>
</svg>
<div style="position:absolute;left:521px;top:71px;width:17px;height:746px;background:#f0f0f0;border-left:1px solid #fff"></div>
<div style="position:absolute;left:522px;top:88px;width:15px;height:448px;background:#cdcdcd"></div>
<div style="position:absolute;left:19px;top:817px;width:502px;height:15px;background:#f0f0f0"></div>
<div style="position:absolute;left:36px;top:817px;width:351px;height:15px;background:#cdcdcd"></div>
<div style="position:absolute;left:521px;top:817px;width:17px;height:15px;background:#f0f0f0"></div>
<div style="position:absolute;left:508px;top:837px;width:25px;height:21px;background:#cde4f7;"></div>
<svg style="position:absolute;left:0;top:0" width="1009" height="921" viewBox="0 0 1009 921">
<path d="M526 83L529.5 79L533 83" stroke="#606060" stroke-width="2" fill="none"/>
<path d="M526 806L529.5 810L533 806" stroke="#606060" stroke-width="2" fill="none"/>
<path d="M29.5 821L26 824.5L29.5 828" stroke="#606060" stroke-width="2" fill="none"/>
<path d="M511 821L514.5 824.5L511 828" stroke="#606060" stroke-width="2" fill="none"/>
<path d="M515.5 839.5H524.5L527.5 842.5V854.5H515.5Z" fill="#fff" stroke="#606060" stroke-width="1.2"/>
<rect x="512" y="842" width="13.5" height="7.5" fill="#3a78b8"/>
<path d="M519.5 851L522 853L524.5 851Z" fill="#3a78b8"/>
<circle cx="515.5" cy="845" r="1.2" fill="#dbe8f5"/><circle cx="522" cy="845" r="1.2" fill="#dbe8f5"/>
</svg>
<div style="position:absolute;left:553px;top:808px;width:432px;height:21px;background:#e6e6f0"></div>
<div style="position:absolute;left:553px;top:837px;width:25px;height:21px;background:#cde4f7;"></div>
<div style="position:absolute;left:581px;top:837px;width:25px;height:21px;background:#e5e5e5;"></div>
<div style="position:absolute;left:656px;top:837px;width:37px;height:21px;background:#cde4f7;"></div>
<div style="position:absolute;left:656px;top:837px;width:21px;height:21px;border:1px solid #0d5ba5;border-right:none"></div>
<div style="position:absolute;left:696px;top:837px;width:25px;height:21px;background:#cde4f7;border:1px solid #0d5ba5;"></div>
<div style="position:absolute;left:724px;top:837px;width:25px;height:21px;background:#cde4f7;border:1px solid #0d5ba5;"></div>
<div style="position:absolute;left:752px;top:837px;width:25px;height:21px;background:#cde4f7;"></div>
<div style="position:absolute;left:780px;top:837px;width:25px;height:21px;background:#cde4f7;"></div>
<div style="position:absolute;left:808px;top:837px;width:25px;height:21px;background:#cde4f7;"></div>
<div style="position:absolute;left:836px;top:837px;width:25px;height:21px;background:#e5e5e5;"></div>
<div style="position:absolute;left:864px;top:837px;width:25px;height:21px;background:#cde4f7;"></div>
<div style="position:absolute;left:892px;top:837px;width:25px;height:21px;background:#e5e5e5;"></div>
<div style="position:absolute;left:920px;top:837px;width:37px;height:21px;background:#cde4f7;"></div>
<div style="position:absolute;left:960px;top:837px;width:25px;height:21px;background:#cde4f7;"></div>
<div style="position:absolute;left:10px;top:888px;width:25px;height:21px;background:#cde4f7;"></div>
<div style="position:absolute;left:45px;top:888px;width:25px;height:21px;background:#cde4f7;"></div>
<svg style="position:absolute;left:0;top:0" width="1009" height="921" viewBox="0 0 1009 921">
<path d="M972 816L976 820L980 816" stroke="#606060" stroke-width="1.1" fill="none"/>
<rect x="558" y="819" width="3" height="1" fill="#000"/><rect x="562" y="819" width="3" height="1" fill="#000"/>
<rect x="557.6" y="839.6" width="6.8" height="5.8" rx="0.5" fill="none" stroke="#3f6fe0" stroke-width="1.3"/>
<path d="M559.2 841H561.2V843.3H562.8V845H559.2Z" fill="#3f6fe0"/>
<path d="M566.5 840.3Q570.3 840.5 570.5 845" stroke="#5a5a5a" stroke-width="1.3" fill="none"/><path d="M568.2 844.3L570.5 846.8L572.8 844.3Z" fill="#5a5a5a"/>
<path d="M563 852.6Q559.3 852.3 559.4 848" stroke="#5a5a5a" stroke-width="1.3" fill="none"/><path d="M557.2 848.6L559.4 846L561.6 848.6Z" fill="#5a5a5a"/>
<path d="M564 847.2H571V850.2H573V854.5H566.5L564 853Z" fill="#4d6ca8"/><path d="M564 847.2L566 848V854.3L564 853Z" fill="#a6d0f7"/><path d="M566 850.3H573" stroke="#9bbbe0" stroke-width="0.6"/>
<path d="M596 839.5L591 841.5Q589 847 591 853L596 855M591 841.5L592.5 841M591 853L592.5 853.5" stroke="#8a8a8a" stroke-width="0.9" fill="none"/><path d="M596 839.5L596.5 842M596 855L596.5 852.5" stroke="#8a8a8a" stroke-width="0.9"/>
<defs><linearGradient id="tg" x1="0" y1="0" x2="1" y2="1"><stop offset="0" stop-color="#bfe3f7"/><stop offset="1" stop-color="#6a87b5"/></linearGradient><linearGradient id="gg" x1="0" y1="0" x2="1" y2="1"><stop offset="0" stop-color="#bfe6fb"/><stop offset="1" stop-color="#5a7aa8"/></linearGradient></defs>
<path d="M660.5 842.5H667.5L671.5 852.5H660.5Z" fill="url(#tg)" stroke="#5a6f9a" stroke-width="0.8"/>
<circle cx="660.5" cy="842.5" r="1.4" fill="#2fd02f"/>
<circle cx="667.5" cy="842.5" r="1.4" fill="#2fd02f"/>
<circle cx="660.5" cy="852.5" r="1.4" fill="#2fd02f"/>
<circle cx="671.5" cy="852.5" r="1.4" fill="#2fd02f"/>
<path d="M682 845H689L685.5 849Z" fill="#000"/>
<text x="708.5" y="844" font-family="Liberation Sans" font-size="6" font-weight="bold" fill="#333" text-anchor="middle">100</text>
<path d="M702 846.5H715M701.5 843.5V850.5M715.5 843.5V850.5" stroke="#000" stroke-width="1.2"/><path d="M702 846.5L704.5 845V848ZM715 846.5L712.5 845V848Z" fill="#000"/>
<rect x="701" y="852" width="14" height="1.6" fill="#232c66"/>
<path d="M739 840.5H732.5V852.5H735" stroke="#2b3a67" stroke-width="1.3" fill="none"/>
<path d="M735.5 846V854.5M735.5 846H742" stroke="#d6447f" stroke-width="1"/><circle cx="735.5" cy="846" r="1.2" fill="#d6447f"/>
<path d="M741 844.5L743 846L741 847.5Z" fill="#d6447f"/><text x="741" y="843.5" font-family="Liberation Sans" font-size="5.5" fill="#d6447f">y</text><text x="737" y="855" font-family="Liberation Sans" font-size="5" fill="#d6447f">z</text>
<circle cx="759.5" cy="845" r="1.3" fill="#d6447f"/><text x="0" y="0" font-family="Liberation Sans" font-size="7" fill="#d6447f" transform="translate(756,854.5) scale(0.68,1.2)">SC</text>
<path d="M771 840.5H764.5V852.5H771" stroke="#2b3a67" stroke-width="1.3" fill="none"/>
<path d="M785.5 840.5H797.5M791.5 840.5V852.5M785.5 852.5H797.5" stroke="#2b3a67" stroke-width="1.3"/>
<circle cx="785.5" cy="840.5" r="1.1" fill="#ee1c1c"/>
<circle cx="791.5" cy="840.5" r="1.1" fill="#ee1c1c"/>
<circle cx="797.5" cy="840.5" r="1.1" fill="#ee1c1c"/>
<circle cx="791.5" cy="846.5" r="1.1" fill="#ee1c1c"/>
<circle cx="785.5" cy="852.5" r="1.1" fill="#ee1c1c"/>
<circle cx="791.5" cy="852.5" r="1.1" fill="#ee1c1c"/>
<circle cx="797.5" cy="852.5" r="1.1" fill="#ee1c1c"/>
<path d="M813 840.5H818.6M820.4 840.5H826M819.5 841.5V851.5M813 852.5H818.6M820.4 852.5H826" stroke="#2b3a67" stroke-width="1.3"/>
<text x="842" y="845.5" font-family="Liberation Sans" font-size="6.5" fill="#9a9a9a" text-anchor="middle">1</text><text x="848.5" y="845.5" font-family="Liberation Sans" font-size="6.5" fill="#9a9a9a" text-anchor="middle">2</text><text x="855" y="845.5" font-family="Liberation Sans" font-size="6.5" fill="#9a9a9a" text-anchor="middle">3</text><path d="M841.5 850.5H855.5M842 849V852M848.5 849.5V851.5M855 849V852" stroke="#909090" stroke-width="0.8"/>
<rect x="869.5" y="841" width="13" height="13" fill="url(#gg)"/><path d="M869.5 841.5H882.5M869.5 845.5H882.5M869.5 849.5H882.5M869.5 853.5H882.5M869.5 841V854M873.5 841V854M877.5 841V854M882 841V854" stroke="#3d5580" stroke-width="0.6"/>
<rect x="900" y="841" width="2" height="1" fill="#8a8a8a"/><rect x="907" y="841" width="2" height="1" fill="#8a8a8a"/><rect x="903" y="840.5" width="3" height="2" fill="#555"/>
<rect x="900" y="844" width="2" height="1" fill="#8a8a8a"/><rect x="907" y="844" width="2" height="1" fill="#8a8a8a"/><rect x="903" y="843.5" width="3" height="2" fill="#bbb"/>
<rect x="900" y="847" width="2" height="1" fill="#8a8a8a"/><rect x="907" y="847" width="2" height="1" fill="#8a8a8a"/><rect x="903" y="846.5" width="3" height="2" fill="#999"/>
<rect x="900" y="850" width="2" height="1" fill="#8a8a8a"/><rect x="907" y="850" width="2" height="1" fill="#8a8a8a"/><rect x="903" y="849.5" width="3" height="2" fill="#aaa"/>
<rect x="900" y="853" width="2" height="1" fill="#8a8a8a"/><rect x="907" y="853" width="2" height="1" fill="#8a8a8a"/><rect x="903" y="852.5" width="3" height="2" fill="#444"/>
<rect x="925.5" y="839" width="9.5" height="3" fill="#5f5f5f"/><path d="M922 844.5Q922 843 923.5 843H937.5Q939 843 939 844.5V851H922Z" fill="#5f5f5f"/><rect x="924.5" y="848" width="11" height="7" fill="#fff" stroke="#5f5f5f" stroke-width="1"/><path d="M926.5 850.5H933.5M926.5 852.5H933.5" stroke="#5f5f5f" stroke-width="0.9"/><rect x="935.5" y="845" width="1.6" height="1" fill="#fff"/>
<path d="M946 845H953L949.5 849Z" fill="#000"/>
<circle cx="969" cy="845.5" r="4.3" fill="none" stroke="#646464" stroke-width="1.7"/><path d="M972.2 848.8L976.8 853.5" stroke="#646464" stroke-width="1.9"/>
<path d="M972.5 840L979 846.5M979 840L972.5 846.5" stroke="#ee0000" stroke-width="2"/>
<circle cx="23" cy="896.8" r="6" fill="#616161"/><path d="M18.5 899L14.8 905.2L22.5 902Z" fill="#616161"/><text x="23" y="900.8" font-family="Liberation Sans" font-size="10.5" font-weight="bold" fill="#fff" text-anchor="middle">?</text>
<rect x="49" y="890" width="16" height="5" fill="#9be07d"/><path d="M50.5 892.5V895M53.5 892.5V895M56.5 892.5V895M59.5 892.5V895M62.5 892.5V895" stroke="#6cbf55" stroke-width="0.7"/>
<text x="0" y="0" font-family="Liberation Sans" font-size="10" fill="#000" transform="translate(48.5,903.8) scale(0.85,1)">0,</text><text x="0" y="0" font-family="Liberation Sans" font-size="10" fill="#3b6fe0" transform="translate(55.8,903.8) scale(0.85,1)">00</text><rect x="56" y="904.8" width="9.2" height="1" fill="#3b6fe0"/>
<rect x="1003" y="911" width="1.3" height="1.3" fill="#a0a0a0"/>
<rect x="1003" y="914" width="1.3" height="1.3" fill="#a0a0a0"/>
<rect x="1000" y="914" width="1.3" height="1.3" fill="#a0a0a0"/>
<rect x="1003" y="917" width="1.3" height="1.3" fill="#a0a0a0"/>
<rect x="1000" y="917" width="1.3" height="1.3" fill="#a0a0a0"/>
<rect x="997" y="917" width="1.3" height="1.3" fill="#a0a0a0"/>
<path d="M9.3 12.4L17.5 7.2L24.6 12.5L20.5 16.8L16 14Z" fill="#4d86d6" stroke="#2a2a2a" stroke-width="0.7" stroke-linejoin="round"/>
<path d="M12 11.5L20 9.5M14.5 13L22.5 12M17 15L21.5 14" stroke="#a8cdf5" stroke-width="0.9"/>
<path d="M17.5 12Q12 12.5 11.8 18" stroke="#2a2a2a" stroke-width="4.2" fill="none" stroke-linecap="round"/>
<ellipse cx="14.5" cy="18.2" rx="3.2" ry="3.4" fill="none" stroke="#2a2a2a" stroke-width="4.2"/>
<path d="M17.5 12Q12 12.5 11.8 18" stroke="#f7cf2a" stroke-width="2.6" fill="none" stroke-linecap="round"/>
<ellipse cx="14.5" cy="18.2" rx="3.2" ry="3.4" fill="none" stroke="#f7cf2a" stroke-width="2.6"/>
<circle cx="14.5" cy="18.3" r="1.1" fill="#fff"/>
</svg>
<div style="position:absolute;right:24px;top:788.39px;font-size:11.5px;line-height:13.22px;color:#000;white-space:nowrap;-webkit-text-stroke:0.2px #000;transform-origin:100% 0;transform:scaleX(0.8767);">[mm]</div>
<div style="position:absolute;left:917px;top:889px;width:81px;height:21px;background:#e1e1e1;border:1px solid #adadad;"></div>
<div style="position:absolute;left:944px;top:894.39px;font-size:11.5px;line-height:13.22px;color:#000;white-space:nowrap;-webkit-text-stroke:0.2px #000;transform-origin:0 0;transform:scaleX(0.9184);">Close</div>
<svg style="position:absolute;left:0;top:0" width="1009" height="921" viewBox="0 0 1009 921"><defs><filter id="sh" x="-30%" y="-30%" width="160%" height="160%"><feGaussianBlur stdDeviation="1.2"/></filter></defs><path d="M7.5 654.5H22V647L42.5 656.3L22 666.5V659.5H7.5Z" fill="#000" opacity="0.45" filter="url(#sh)" transform="translate(1.5,2)"/><path d="M7.5 652.8H21.5V646L42.5 656L21.5 666.5V659.9H7.5A3.55 3.55 0 0 1 7.5 652.8Z" fill="#0000ff"/></svg>
</body></html>
